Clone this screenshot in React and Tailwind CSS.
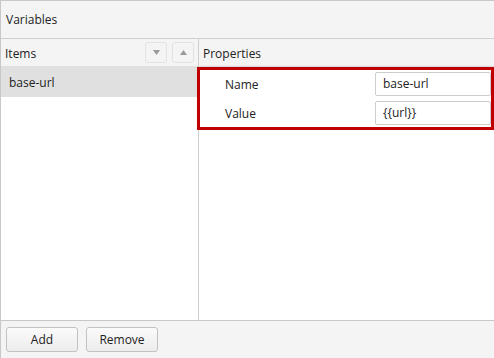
import React from "react";

const font = { fontFamily: '"Open Sans", "Noto Sans", sans-serif' };

function ArrowButton({ up }) {
  return (
    <div className="w-[22px] h-[21px] rounded-[3px] border border-[#e2e2e2] bg-[#f4f4f4] flex items-center justify-center">
      <svg width="7" height="5" viewBox="0 0 7 5">
        {up ? (
          <polygon points="0,5 7,5 3.5,0" fill="#9a9a9a" />
        ) : (
          <polygon points="0,0 7,0 3.5,5" fill="#9a9a9a" />
        )}
      </svg>
    </div>
  );
}

function ToolButton({ label }) {
  return (
    <div className="w-[72px] h-[25px] rounded-[3px] border border-[#c2c2c2] bg-gradient-to-b from-[#fbfbfb] to-[#ececec] flex items-center justify-center pt-[1px] text-[12px] text-[#222]">
      {label}
    </div>
  );
}

function PropRow({ label, value }) {
  return (
    <div className="flex items-center h-[27px]">
      <div className="w-[175px] pl-[25px] pt-[2px] text-[12px] text-[#222]">{label}</div>
      <div className="w-[116px] h-[24px] rounded-[2px] border border-[#cdcdcd] bg-white flex items-center px-[7px] pt-[1px] text-[12px] text-[#222]">
        {value}
      </div>
    </div>
  );
}

export default function App() {
  return (
    <div
      className="w-[494px] h-[358px] flex flex-col border-l border-t border-[#c8c8c8] bg-white relative overflow-hidden"
      style={font}
    >
      <div className="h-[38px] shrink-0 bg-[#f4f4f4] border-b border-[#cfcfcf] flex items-center pl-[5px] pt-[1px] text-[12px] text-[#222]">
        Variables
      </div>
      <div className="flex-1 flex min-h-0">
        <div className="w-[198px] shrink-0 border-r border-[#cfcfcf] flex flex-col">
          <div className="h-[28px] shrink-0 bg-[#f4f4f4] border-b border-[#e0e0e0] flex items-center pl-[4px] pr-[4px] text-[12px] text-[#222]">
            <span className="flex-1 pt-[3px]">Items</span>
            <div className="flex gap-[5px]">
              <ArrowButton />
              <ArrowButton up />
            </div>
          </div>
          <div className="h-[30px] bg-[#e0e0e0] flex items-center pl-[8px] pt-[2px] text-[12px] text-[#222]">
            base-url
          </div>
        </div>
        <div className="flex-1 flex flex-col">
          <div className="h-[28px] shrink-0 bg-[#f4f4f4] border-b border-[#e0e0e0] flex items-center pl-[4px] pt-[2px] text-[12px] text-[#222]">
            Properties
          </div>
          <div className="mx-[1px] mt-[2px] flex flex-col gap-[2px] pt-[1px] pb-[1px] shadow-[0_0_4px_rgba(0,0,0,0.25)]">
            <PropRow label="Name" value="base-url" />
            <PropRow label="Value" value="{{url}}" />
          </div>
        </div>
      </div>
      <div className="h-[38px] shrink-0 bg-[#f4f4f4] border-t border-[#c8c8c8] flex items-center gap-[8px] pl-[5px]">
        <ToolButton label="Add" />
        <ToolButton label="Remove" />
      </div>
      <div className="absolute left-[196px] top-[66px] w-[297px] h-[63px] border-[3px] border-[#c00000] pointer-events-none" />
    </div>
  );
}
